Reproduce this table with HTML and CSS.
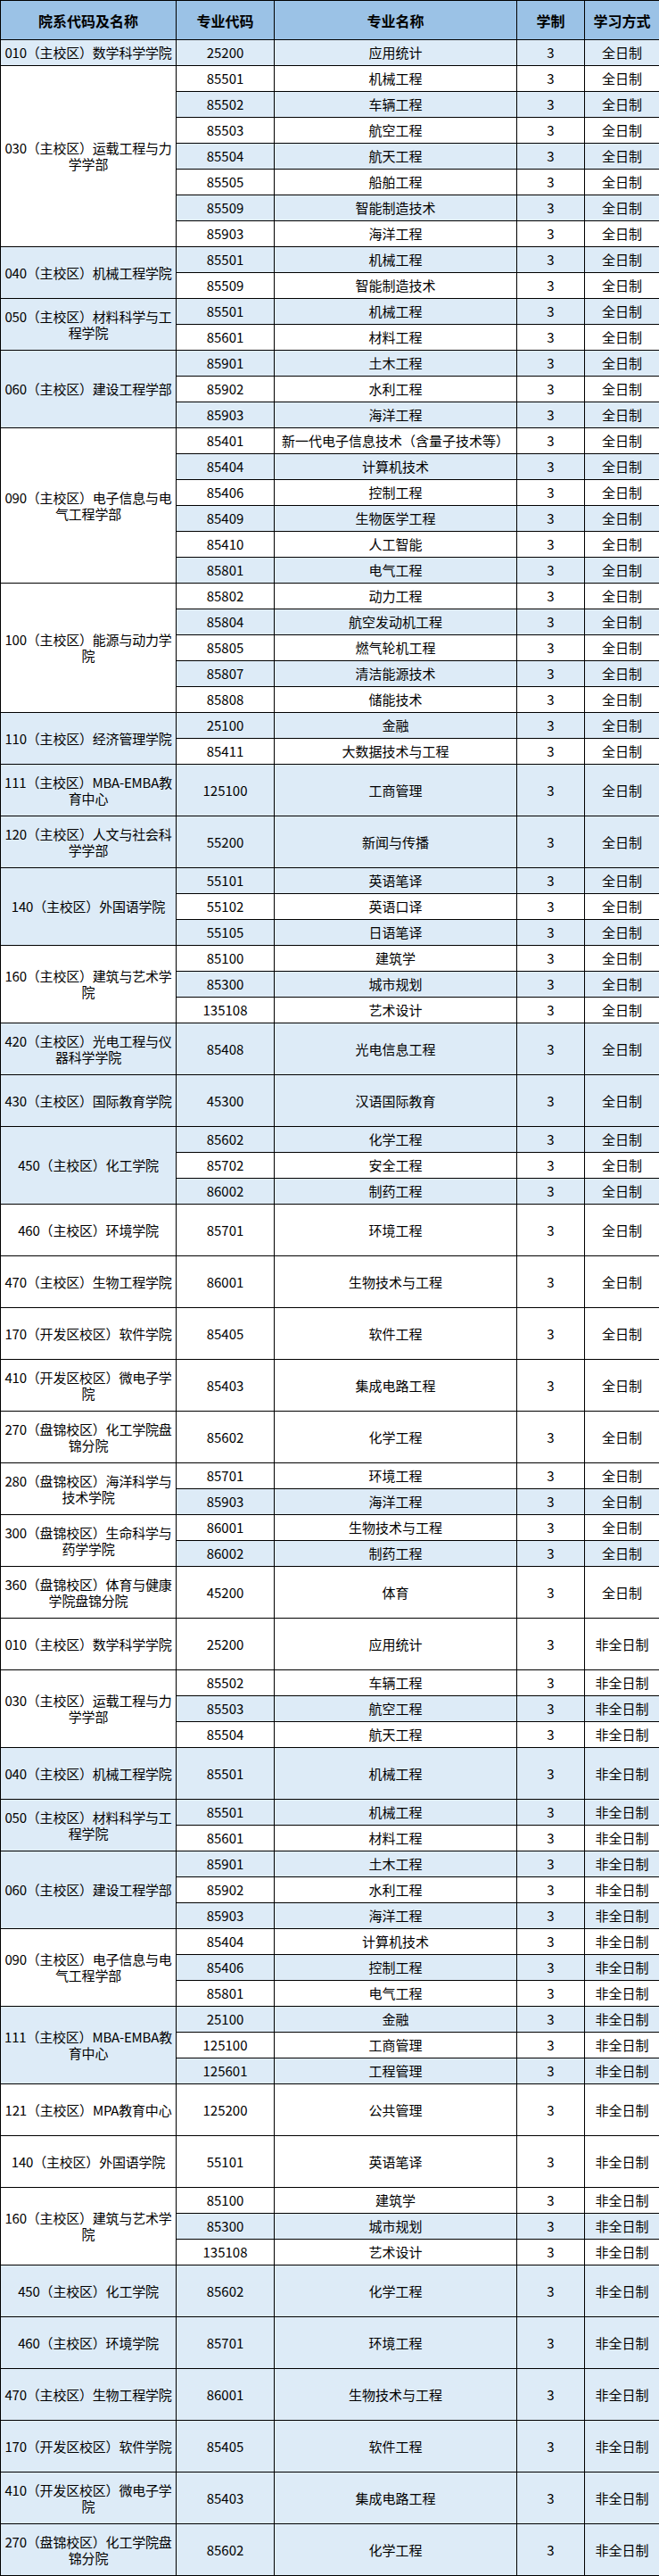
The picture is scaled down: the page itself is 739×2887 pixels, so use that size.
FILE: index.html
```html
<!DOCTYPE html>
<html lang="zh-CN">
<head>
<meta charset="utf-8">
<title>专业目录</title>
<link rel="stylesheet" href="styles.css">
</head>
<body>
<table class="grid">
<colgroup>
<col class="c-dept"><col class="c-code"><col class="c-name"><col class="c-year"><col class="c-mode">
</colgroup>
<thead>
<tr class="head"><th>院系代码及名称</th><th>专业代码</th><th>专业名称</th><th>学制</th><th>学习方式</th></tr>
</thead>
<tbody>
<tr class="s bl"><td class="dept db">010（主校区）数学科学学院</td><td>25200</td><td>应用统计</td><td>3</td><td>全日制</td></tr>

<tr class="s"><td class="dept dw" rowspan="7">030（主校区）运载工程与力<br>学学部</td><td>85501</td><td>机械工程</td><td>3</td><td>全日制</td></tr>
<tr class="s bl"><td>85502</td><td>车辆工程</td><td>3</td><td>全日制</td></tr>
<tr class="s"><td>85503</td><td>航空工程</td><td>3</td><td>全日制</td></tr>
<tr class="s bl"><td>85504</td><td>航天工程</td><td>3</td><td>全日制</td></tr>
<tr class="s"><td>85505</td><td>船舶工程</td><td>3</td><td>全日制</td></tr>
<tr class="s bl"><td>85509</td><td>智能制造技术</td><td>3</td><td>全日制</td></tr>
<tr class="s"><td>85903</td><td>海洋工程</td><td>3</td><td>全日制</td></tr>

<tr class="s bl"><td class="dept db" rowspan="2">040（主校区）机械工程学院</td><td>85501</td><td>机械工程</td><td>3</td><td>全日制</td></tr>
<tr class="s"><td>85509</td><td>智能制造技术</td><td>3</td><td>全日制</td></tr>

<tr class="s bl"><td class="dept db" rowspan="2">050（主校区）材料科学与工<br>程学院</td><td>85501</td><td>机械工程</td><td>3</td><td>全日制</td></tr>
<tr class="s"><td>85601</td><td>材料工程</td><td>3</td><td>全日制</td></tr>

<tr class="s bl"><td class="dept db" rowspan="3">060（主校区）建设工程学部</td><td>85901</td><td>土木工程</td><td>3</td><td>全日制</td></tr>
<tr class="s"><td>85902</td><td>水利工程</td><td>3</td><td>全日制</td></tr>
<tr class="s bl"><td>85903</td><td>海洋工程</td><td>3</td><td>全日制</td></tr>

<tr class="s"><td class="dept dw" rowspan="6">090（主校区）电子信息与电<br>气工程学部</td><td>85401</td><td>新一代电子信息技术（含量子技术等）</td><td>3</td><td>全日制</td></tr>
<tr class="s bl"><td>85404</td><td>计算机技术</td><td>3</td><td>全日制</td></tr>
<tr class="s"><td>85406</td><td>控制工程</td><td>3</td><td>全日制</td></tr>
<tr class="s bl"><td>85409</td><td>生物医学工程</td><td>3</td><td>全日制</td></tr>
<tr class="s"><td>85410</td><td>人工智能</td><td>3</td><td>全日制</td></tr>
<tr class="s bl"><td>85801</td><td>电气工程</td><td>3</td><td>全日制</td></tr>

<tr class="s"><td class="dept dw" rowspan="5">100（主校区）能源与动力学<br>院</td><td>85802</td><td>动力工程</td><td>3</td><td>全日制</td></tr>
<tr class="s bl"><td>85804</td><td>航空发动机工程</td><td>3</td><td>全日制</td></tr>
<tr class="s"><td>85805</td><td>燃气轮机工程</td><td>3</td><td>全日制</td></tr>
<tr class="s bl"><td>85807</td><td>清洁能源技术</td><td>3</td><td>全日制</td></tr>
<tr class="s"><td>85808</td><td>储能技术</td><td>3</td><td>全日制</td></tr>

<tr class="s bl"><td class="dept db" rowspan="2">110（主校区）经济管理学院</td><td>25100</td><td>金融</td><td>3</td><td>全日制</td></tr>
<tr class="s"><td>85411</td><td>大数据技术与工程</td><td>3</td><td>全日制</td></tr>

<tr class="t bl"><td class="dept db">111（主校区）MBA-EMBA教<br>育中心</td><td>125100</td><td>工商管理</td><td>3</td><td>全日制</td></tr>
<tr class="t bl"><td class="dept db">120（主校区）人文与社会科<br>学学部</td><td>55200</td><td>新闻与传播</td><td>3</td><td>全日制</td></tr>

<tr class="s bl"><td class="dept db" rowspan="3">140（主校区）外国语学院</td><td>55101</td><td>英语笔译</td><td>3</td><td>全日制</td></tr>
<tr class="s"><td>55102</td><td>英语口译</td><td>3</td><td>全日制</td></tr>
<tr class="s bl"><td>55105</td><td>日语笔译</td><td>3</td><td>全日制</td></tr>

<tr class="s"><td class="dept dw" rowspan="3">160（主校区）建筑与艺术学<br>院</td><td>85100</td><td>建筑学</td><td>3</td><td>全日制</td></tr>
<tr class="s bl"><td>85300</td><td>城市规划</td><td>3</td><td>全日制</td></tr>
<tr class="s"><td>135108</td><td>艺术设计</td><td>3</td><td>全日制</td></tr>

<tr class="t bl"><td class="dept db">420（主校区）光电工程与仪<br>器科学学院</td><td>85408</td><td>光电信息工程</td><td>3</td><td>全日制</td></tr>
<tr class="t bl"><td class="dept db">430（主校区）国际教育学院</td><td>45300</td><td>汉语国际教育</td><td>3</td><td>全日制</td></tr>

<tr class="s bl"><td class="dept db" rowspan="3">450（主校区）化工学院</td><td>85602</td><td>化学工程</td><td>3</td><td>全日制</td></tr>
<tr class="s"><td>85702</td><td>安全工程</td><td>3</td><td>全日制</td></tr>
<tr class="s bl"><td>86002</td><td>制药工程</td><td>3</td><td>全日制</td></tr>

<tr class="t"><td class="dept dw">460（主校区）环境学院</td><td>85701</td><td>环境工程</td><td>3</td><td>全日制</td></tr>
<tr class="t"><td class="dept dw">470（主校区）生物工程学院</td><td>86001</td><td>生物技术与工程</td><td>3</td><td>全日制</td></tr>
<tr class="t"><td class="dept dw">170（开发区校区）软件学院</td><td>85405</td><td>软件工程</td><td>3</td><td>全日制</td></tr>
<tr class="t"><td class="dept dw">410（开发区校区）微电子学<br>院</td><td>85403</td><td>集成电路工程</td><td>3</td><td>全日制</td></tr>
<tr class="t"><td class="dept dw">270（盘锦校区）化工学院盘<br>锦分院</td><td>85602</td><td>化学工程</td><td>3</td><td>全日制</td></tr>

<tr class="s"><td class="dept dw" rowspan="2">280（盘锦校区）海洋科学与<br>技术学院</td><td>85701</td><td>环境工程</td><td>3</td><td>全日制</td></tr>
<tr class="s bl"><td>85903</td><td>海洋工程</td><td>3</td><td>全日制</td></tr>

<tr class="s"><td class="dept dw" rowspan="2">300（盘锦校区）生命科学与<br>药学学院</td><td>86001</td><td>生物技术与工程</td><td>3</td><td>全日制</td></tr>
<tr class="s bl"><td>86002</td><td>制药工程</td><td>3</td><td>全日制</td></tr>

<tr class="t"><td class="dept dw">360（盘锦校区）体育与健康<br>学院盘锦分院</td><td>45200</td><td>体育</td><td>3</td><td>全日制</td></tr>

<tr class="t"><td class="dept dw">010（主校区）数学科学学院</td><td>25200</td><td>应用统计</td><td>3</td><td>非全日制</td></tr>

<tr class="s"><td class="dept dw" rowspan="3">030（主校区）运载工程与力<br>学学部</td><td>85502</td><td>车辆工程</td><td>3</td><td>非全日制</td></tr>
<tr class="s bl"><td>85503</td><td>航空工程</td><td>3</td><td>非全日制</td></tr>
<tr class="s"><td>85504</td><td>航天工程</td><td>3</td><td>非全日制</td></tr>

<tr class="t bl"><td class="dept db">040（主校区）机械工程学院</td><td>85501</td><td>机械工程</td><td>3</td><td>非全日制</td></tr>

<tr class="s bl"><td class="dept db" rowspan="2">050（主校区）材料科学与工<br>程学院</td><td>85501</td><td>机械工程</td><td>3</td><td>非全日制</td></tr>
<tr class="s"><td>85601</td><td>材料工程</td><td>3</td><td>非全日制</td></tr>

<tr class="s bl"><td class="dept db" rowspan="3">060（主校区）建设工程学部</td><td>85901</td><td>土木工程</td><td>3</td><td>非全日制</td></tr>
<tr class="s"><td>85902</td><td>水利工程</td><td>3</td><td>非全日制</td></tr>
<tr class="s bl"><td>85903</td><td>海洋工程</td><td>3</td><td>非全日制</td></tr>

<tr class="s"><td class="dept dw" rowspan="3">090（主校区）电子信息与电<br>气工程学部</td><td>85404</td><td>计算机技术</td><td>3</td><td>非全日制</td></tr>
<tr class="s bl"><td>85406</td><td>控制工程</td><td>3</td><td>非全日制</td></tr>
<tr class="s"><td>85801</td><td>电气工程</td><td>3</td><td>非全日制</td></tr>

<tr class="s bl"><td class="dept db" rowspan="3">111（主校区）MBA-EMBA教<br>育中心</td><td>25100</td><td>金融</td><td>3</td><td>非全日制</td></tr>
<tr class="s"><td>125100</td><td>工商管理</td><td>3</td><td>非全日制</td></tr>
<tr class="s bl"><td>125601</td><td>工程管理</td><td>3</td><td>非全日制</td></tr>

<tr class="t"><td class="dept dw">121（主校区）MPA教育中心</td><td>125200</td><td>公共管理</td><td>3</td><td>非全日制</td></tr>
<tr class="t"><td class="dept dw">140（主校区）外国语学院</td><td>55101</td><td>英语笔译</td><td>3</td><td>非全日制</td></tr>

<tr class="s"><td class="dept dw" rowspan="3">160（主校区）建筑与艺术学<br>院</td><td>85100</td><td>建筑学</td><td>3</td><td>非全日制</td></tr>
<tr class="s bl"><td>85300</td><td>城市规划</td><td>3</td><td>非全日制</td></tr>
<tr class="s"><td>135108</td><td>艺术设计</td><td>3</td><td>非全日制</td></tr>

<tr class="t bl"><td class="dept db">450（主校区）化工学院</td><td>85602</td><td>化学工程</td><td>3</td><td>非全日制</td></tr>
<tr class="t bl"><td class="dept db">460（主校区）环境学院</td><td>85701</td><td>环境工程</td><td>3</td><td>非全日制</td></tr>
<tr class="t bl"><td class="dept db">470（主校区）生物工程学院</td><td>86001</td><td>生物技术与工程</td><td>3</td><td>非全日制</td></tr>
<tr class="t bl"><td class="dept db">170（开发区校区）软件学院</td><td>85405</td><td>软件工程</td><td>3</td><td>非全日制</td></tr>
<tr class="t bl"><td class="dept db">410（开发区校区）微电子学<br>院</td><td>85403</td><td>集成电路工程</td><td>3</td><td>非全日制</td></tr>
<tr class="t bl"><td class="dept db">270（盘锦校区）化工学院盘<br>锦分院</td><td>85602</td><td>化学工程</td><td>3</td><td>非全日制</td></tr>
</tbody>
</table>
</body>
</html>
```

FILE: styles.css
```css
html, body {
  margin: 0;
  padding: 0;
  background: #ffffff;
}

.grid {
  width: 739px;
  border-collapse: collapse;
  table-layout: fixed;
  font-family: "Noto Sans CJK SC", "Noto Sans", sans-serif;
  font-size: 15px;
  line-height: 18px;
  color: #000000;
}

.c-dept { width: 197px; }
.c-code { width: 110px; }
.c-name { width: 272px; }
.c-year { width: 76px; }
.c-mode { width: 84px; }

.grid th,
.grid td {
  border: 1px solid #000000;
  padding: 0;
  text-align: center;
  vertical-align: middle;
  white-space: nowrap;
  overflow: visible;
}

.head th {
  height: 43px;
  background: #9bc2e6;
  font-size: 16px;
  font-weight: bold;
}

tr.s td { height: 28px; }
tr.t td { height: 57px; }

tr td { background: #ffffff; }
tr.bl td { background: #ddebf7; }

.grid td.dept.db { background: #ddebf7; }
.grid td.dept.dw { background: #ffffff; }

.dept {
  letter-spacing: -0.2px;
}
```
